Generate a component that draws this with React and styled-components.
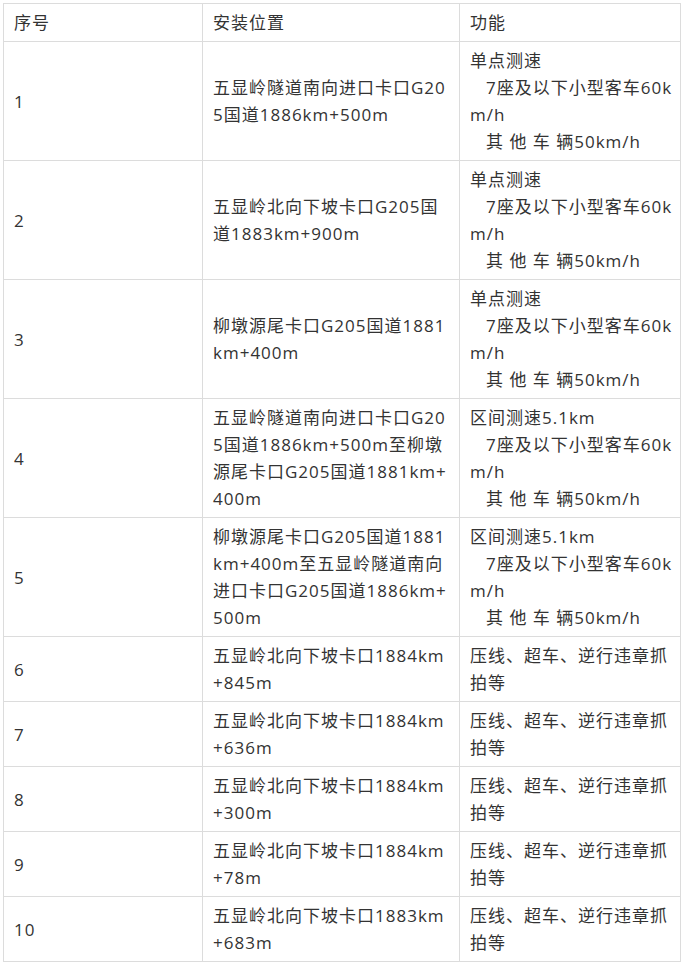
import React from "react";
import styled, { createGlobalStyle } from "styled-components";

const GlobalStyle = createGlobalStyle`
  body {
    margin: 0;
    background: #ffffff;
    font-family: "Open Sans", "Noto Sans CJK SC", sans-serif;
  }
`;

const Page = styled.div`
  padding: 3px 0 0 3px;
`;

const Table = styled.table`
  width: 677px;
  table-layout: fixed;
  border-collapse: collapse;
  color: #333333;
  font-size: 17px;
  letter-spacing: 1px;
  line-height: 27px;
`;

const Cell = styled.td`
  border: 1px solid #dcdcdc;
  padding: 5px 10px;
  vertical-align: middle;
  text-align: left;
  font-weight: normal;
  overflow: visible;
`;

const HeadCell = styled(Cell).attrs({ as: "th" })``;

const Line = styled.div`
  white-space: nowrap;
  padding-left: ${(p) => (p.$indent ? "16px" : "0")};
`;

const speed = (title) => [
  { text: title },
  { text: "7座及以下小型客车60k", indent: true },
  { text: "m/h" },
  { text: "其 他 车 辆50km/h", indent: true },
];

const capture = [{ text: "压线、超车、逆行违章抓" }, { text: "拍等" }];

const rows = [
  { no: "1", place: ["五显岭隧道南向进口卡口G20", "5国道1886km+500m"], func: speed("单点测速") },
  { no: "2", place: ["五显岭北向下坡卡口G205国", "道1883km+900m"], func: speed("单点测速") },
  { no: "3", place: ["柳墩源尾卡口G205国道1881", "km+400m"], func: speed("单点测速") },
  {
    no: "4",
    place: ["五显岭隧道南向进口卡口G20", "5国道1886km+500m至柳墩", "源尾卡口G205国道1881km+", "400m"],
    func: speed("区间测速5.1km"),
  },
  {
    no: "5",
    place: ["柳墩源尾卡口G205国道1881", "km+400m至五显岭隧道南向", "进口卡口G205国道1886km+", "500m"],
    func: speed("区间测速5.1km"),
  },
  { no: "6", place: ["五显岭北向下坡卡口1884km", "+845m"], func: capture },
  { no: "7", place: ["五显岭北向下坡卡口1884km", "+636m"], func: capture },
  { no: "8", place: ["五显岭北向下坡卡口1884km", "+300m"], func: capture },
  { no: "9", place: ["五显岭北向下坡卡口1884km", "+78m"], func: capture },
  { no: "10", place: ["五显岭北向下坡卡口1883km", "+683m"], func: capture },
];

export default function App() {
  return (
    <Page>
      <GlobalStyle />
      <Table>
        <colgroup>
          <col style={{ width: 199 }} />
          <col style={{ width: 257 }} />
          <col style={{ width: 221 }} />
        </colgroup>
        <thead>
          <tr>
            <HeadCell>序号</HeadCell>
            <HeadCell>安装位置</HeadCell>
            <HeadCell>功能</HeadCell>
          </tr>
        </thead>
        <tbody>
          {rows.map((r) => (
            <tr key={r.no}>
              <Cell>{r.no}</Cell>
              <Cell>
                {r.place.map((t, i) => (
                  <Line key={i}>{t}</Line>
                ))}
              </Cell>
              <Cell>
                {r.func.map((l, i) => (
                  <Line key={i} $indent={l.indent}>
                    {l.text}
                  </Line>
                ))}
              </Cell>
            </tr>
          ))}
        </tbody>
      </Table>
    </Page>
  );
}
